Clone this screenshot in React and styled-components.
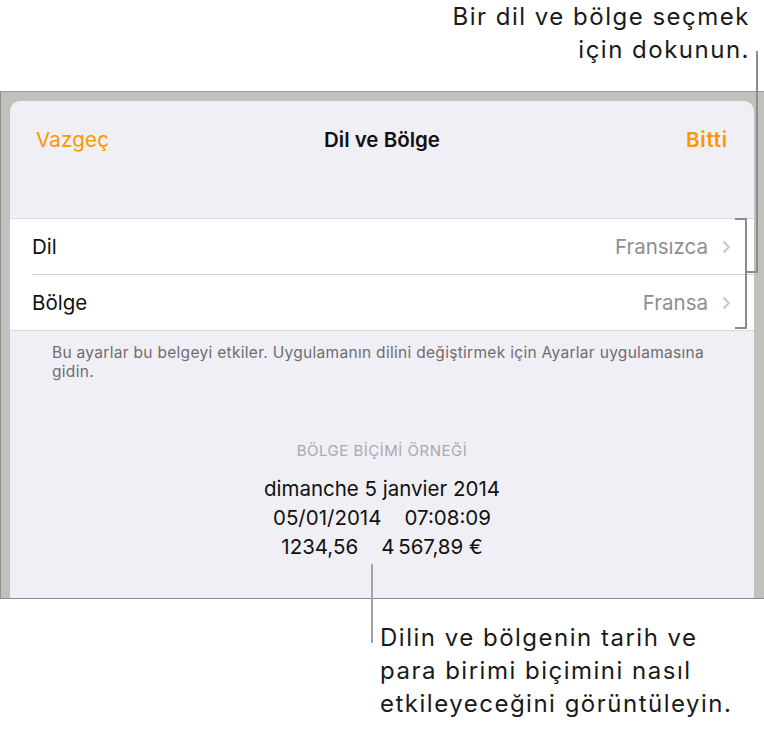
import React from "react";
import styled, { createGlobalStyle } from "styled-components";

const Global = createGlobalStyle`
  body {
    margin: 0;
    background: #fff;
    font-family: Inter, "Noto Sans", sans-serif;
  }
`;

const Page = styled.div`
  position: relative;
  width: 764px;
  height: 734px;
  overflow: hidden;
  background: #fff;
  color: #1a1a1a;
`;

const Callout = styled.div`
  font-size: 24px;
  line-height: 33px;
  letter-spacing: 1.5px;
  color: #1a1a1a;
  text-align: ${(p) => (p.$right ? "right" : "left")};
  padding: ${(p) => p.$pad};
  height: ${(p) => p.$height || "auto"};
  box-sizing: border-box;
`;

const Frame = styled.div`
  height: 508px;
  box-sizing: border-box;
  background: #bfc1bc;
  border-top: 1px solid #9c9d99;
  border-left: 1px solid #8f908d;
  border-bottom: 1px solid #8a8a8e;
  padding: 9px 10px 0 9px;
  display: flex;
`;

const Sheet = styled.div`
  flex: 1;
  background: #f0eff5;
  border-radius: 10px 10px 0 0;
  display: flex;
  flex-direction: column;
`;

const Header = styled.div`
  height: 76px;
  display: grid;
  grid-template-columns: 1fr auto 1fr;
  align-items: center;
  padding: 0 26px;
  font-size: 20.5px;
`;

const NavButton = styled.span`
  color: #ff9500;
  font-weight: ${(p) => (p.$bold ? 600 : 400)};
  letter-spacing: ${(p) => (p.$bold ? "0.8px" : "0.2px")};
  justify-self: ${(p) => (p.$end ? "end" : "start")};
`;

const Title = styled.span`
  font-weight: 600;
  color: #111;
`;

const Table = styled.div`
  margin-top: 41px;
  background: #fff;
  border-top: 1px solid #d9d9de;
  border-bottom: 1px solid #d9d9de;
  padding-left: 22px;
`;

const Row = styled.div`
  height: 55px;
  display: flex;
  align-items: center;
  padding-right: 23px;
  font-size: 20.5px;
  & + & {
    border-top: 1px solid #d4d4d8;
  }
`;

const Label = styled.span`
  flex: 1;
  color: #111;
`;

const Value = styled.span`
  color: #8e8e93;
  margin-right: 14px;
`;

const Note = styled.p`
  margin: 12px 0 0;
  padding: 0 30px 0 42px;
  font-size: 15.5px;
  line-height: 19px;
  letter-spacing: 0.3px;
  color: #6d6d72;
`;

const Sample = styled.div`
  margin-top: 60px;
  display: flex;
  flex-direction: column;
  align-items: center;
`;

const SampleLabel = styled.div`
  font-size: 15px;
  line-height: 20px;
  letter-spacing: 0.5px;
  color: #a9a9ae;
  margin-bottom: 13px;
`;

const SampleLine = styled.div`
  font-size: 20.5px;
  line-height: 29px;
  color: #111;
  white-space: pre;
`;

const Lines = styled.svg`
  position: absolute;
  left: 0;
  top: 0;
  pointer-events: none;
`;

const Chevron = () => (
  <svg width="9" height="14" viewBox="0 0 9 14">
    <path d="M1.5 1.5 L7 7 L1.5 12.5" fill="none" stroke="#c4c4c9" strokeWidth="1.8" />
  </svg>
);

export default function App() {
  return (
    <Page>
      <Global />
      <Callout $right $pad="0 14px 0 0" $height="91px">
        Bir dil ve bölge seçmek
        <br />
        için dokunun.
      </Callout>
      <Frame>
        <Sheet>
          <Header>
            <NavButton>Vazgeç</NavButton>
            <Title>Dil ve Bölge</Title>
            <NavButton $bold $end>
              Bitti
            </NavButton>
          </Header>
          <Table>
            <Row>
              <Label>Dil</Label>
              <Value>Fransızca</Value>
              <Chevron />
            </Row>
            <Row>
              <Label>Bölge</Label>
              <Value>Fransa</Value>
              <Chevron />
            </Row>
          </Table>
          <Note>
            Bu ayarlar bu belgeyi etkiler. Uygulamanın dilini değiştirmek için Ayarlar uygulamasına
            gidin.
          </Note>
          <Sample>
            <SampleLabel>BÖLGE BİÇİMİ ÖRNEĞİ</SampleLabel>
            <SampleLine>dimanche 5 janvier 2014</SampleLine>
            <SampleLine>{"05/01/2014    07:08:09"}</SampleLine>
            <SampleLine>{"1234,56    4\u202f567,89\u00a0€"}</SampleLine>
          </Sample>
        </Sheet>
      </Frame>
      <Callout $pad="22px 0 0 380px">
        Dilin ve bölgenin tarih ve
        <br />
        para birimi biçimini nasıl
        <br />
        etkileyeceğini görüntüleyin.
      </Callout>
      <Lines width="764" height="734">
        <g stroke="#8c8c8c" strokeWidth="2" fill="none">
          <line x1="757" y1="51" x2="757" y2="273" />
          <polyline points="735,219 746,219 746,328 735,328" />
          <line x1="746" y1="272" x2="757" y2="272" />
        </g>
        <line x1="372" y1="564" x2="372" y2="643" stroke="#a3a3a3" strokeWidth="2" />
      </Lines>
    </Page>
  );
}
